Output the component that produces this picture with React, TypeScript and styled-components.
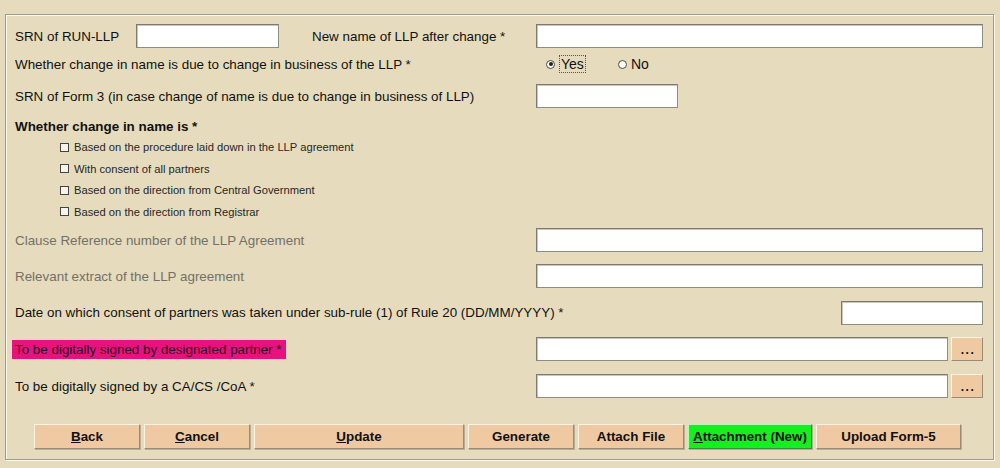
import React from "react";
import styled, { createGlobalStyle } from "styled-components";

const Global = createGlobalStyle`
  html, body { margin: 0; padding: 0; background: #e6dcbd; }
  body { font-family: "Liberation Sans", Arial, sans-serif; font-size: 13.4px; color: #111; }
  * { box-sizing: border-box; }
`;

const Page = styled.div`
  width: 1000px;
  height: 468px;
  padding: 14px 6px 0 5px;
  background: #e6dcbd;
`;

const Frame = styled.div`
  height: 446px;
  border: 1px solid #9d9a8e;
  box-shadow: inset 1px 1px 0 #fbf8ee, 1px 1px 0 #fbf8ee;
  padding: 9px 10px 0 9px;
  display: flex;
  flex-direction: column;
`;

const Row = styled.div<{ $mt?: number; $h?: number }>`
  display: grid;
  grid-template-columns: 1fr 447px;
  align-items: center;
  margin-top: ${(p) => p.$mt ?? 0}px;
  height: ${(p) => p.$h ?? 24}px;
`;

const SplitRow = styled.div<{ $mt?: number }>`
  display: flex;
  align-items: center;
  justify-content: space-between;
  margin-top: ${(p) => p.$mt ?? 0}px;
  height: 24px;
`;

const Inline = styled.div`
  display: flex;
  align-items: center;
`;

const Label = styled.span<{ $muted?: boolean; $w?: number; $ml?: number }>`
  color: ${(p) => (p.$muted ? "#737069" : "#111")};
  white-space: nowrap;
  ${(p) => (p.$w ? `width: ${p.$w}px;` : "")}
  ${(p) => (p.$ml ? `margin-left: ${p.$ml}px;` : "")}
`;

const Heading = styled.div<{ $mt?: number }>`
  font-weight: bold;
  margin-top: ${(p) => p.$mt ?? 0}px;
  height: 16px;
  line-height: 16px;
`;

const Highlight = styled.span`
  background: #e6127e;
  color: #2a0a1c;
  margin-left: -3px;
  padding: 2px 4px 2px 3px;
  white-space: nowrap;
`;

const Input = styled.div<{ $w?: number }>`
  width: ${(p) => (p.$w ? `${p.$w}px` : "100%")};
  height: 24px;
  background: #fff;
  border: 1px solid #8f8c84;
  border-top-color: #7d7a72;
  border-left-color: #7d7a72;
  box-shadow: inset 1px 1px 0 #c9c5ba;
`;

const FieldWithButton = styled.div`
  display: flex;
  align-items: center;
  gap: 3px;
`;

const DotsButton = styled.div`
  width: 32px;
  height: 24px;
  flex: none;
  background: #efc9a1;
  border: 1px solid;
  border-color: #fff4e4 #9b8b76 #9b8b76 #fff4e4;
  font-weight: bold;
  font-size: 12px;
  letter-spacing: 1.5px;
  display: flex;
  justify-content: center;
  align-items: flex-end;
  padding-bottom: 4px;
  padding-left: 2px;
  line-height: 1;
`;

const RadioGroup = styled.div`
  display: flex;
  align-items: center;
  padding-left: 10px;
  height: 24px;
`;

const RadioOption = styled.label<{ $w?: number }>`
  display: flex;
  align-items: center;
  gap: 4px;
  width: ${(p) => p.$w ?? 72}px;
  font-size: 14px;
`;

const RadioCircle = styled.span<{ $on?: boolean }>`
  width: 9px;
  height: 9px;
  border-radius: 50%;
  border: 1px solid #4a4a4a;
  background: #fbf9f3;
  position: relative;
  flex: none;
  &::after {
    content: "";
    display: ${(p) => (p.$on ? "block" : "none")};
    position: absolute;
    left: 1.5px;
    top: 1.5px;
    width: 4px;
    height: 4px;
    border-radius: 50%;
    background: #222;
  }
`;

const Focus = styled.span`
  border: 1px dotted #555;
  padding: 0 1px;
  line-height: 16px;
`;

const Checks = styled.div`
  display: flex;
  flex-direction: column;
  gap: 5.5px;
  margin-top: 4.5px;
  padding-left: 45px;
`;

const CheckRow = styled.label`
  display: flex;
  align-items: center;
  gap: 5px;
  height: 16px;
  font-size: 11.2px;
  color: #262626;
`;

const CheckBox = styled.span`
  width: 9px;
  height: 9px;
  border: 1px solid #444;
  background: #f7f4ea;
  flex: none;
`;

const ButtonBar = styled.div`
  display: flex;
  gap: 4px;
  margin-top: 26px;
  padding-left: 19px;
`;

const Button = styled.div<{ $w: number; $green?: boolean }>`
  width: ${(p) => p.$w}px;
  height: 25px;
  background: ${(p) => (p.$green ? "#15ef1f" : "#efc9a1")};
  border: 1px solid;
  border-color: ${(p) =>
    p.$green ? "#b7f7b4 #3b8c38 #3b8c38 #b7f7b4" : "#fff4e4 #9b8b76 #9b8b76 #fff4e4"};
  box-shadow: 1px 1px 0 #b9ad95;
  font-weight: bold;
  display: flex;
  align-items: center;
  justify-content: center;
  color: #111;
  white-space: nowrap;
  u { text-decoration: underline; }
`;

export default function App() {
  return (
    <Page>
      <Global />
      <Frame>
        <Row $h={24}>
          <Inline>
            <Label $w={121}>SRN of RUN-LLP</Label>
            <Input $w={143} />
            <Label $ml={33}>New name of LLP after change *</Label>
          </Inline>
          <Input />
        </Row>

        <Row $mt={4} $h={18}>
          <Label>Whether change in name is due to change in business of the LLP *</Label>
          <RadioGroup>
            <RadioOption $w={72}>
              <RadioCircle $on />
              <Focus>Yes</Focus>
            </RadioOption>
            <RadioOption>
              <RadioCircle />
              <span>No</span>
            </RadioOption>
          </RadioGroup>
        </Row>

        <Row $mt={14}>
          <Label>SRN of Form 3 (in case change of name is due to change in business of LLP)</Label>
          <Input $w={142} />
        </Row>

        <Heading $mt={10.5}>Whether change in name is *</Heading>

        <Checks>
          <CheckRow><CheckBox />Based on the procedure laid down in the LLP agreement</CheckRow>
          <CheckRow><CheckBox />With consent of all partners</CheckRow>
          <CheckRow><CheckBox />Based on the direction from Central Government</CheckRow>
          <CheckRow><CheckBox />Based on the direction from Registrar</CheckRow>
        </Checks>

        <Row $mt={8.5}>
          <Label $muted>Clause Reference number of the LLP Agreement</Label>
          <Input />
        </Row>

        <Row $mt={12}>
          <Label $muted>Relevant extract of the LLP agreement</Label>
          <Input />
        </Row>

        <SplitRow $mt={12.5}>
          <Label>Date on which consent of partners was taken under sub-rule (1) of Rule 20 (DD/MM/YYYY) *</Label>
          <Input $w={142} />
        </SplitRow>

        <Row $mt={12.5}>
          <Label><Highlight>To be digitally signed by designated partner *</Highlight></Label>
          <FieldWithButton>
            <Input />
            <DotsButton>...</DotsButton>
          </FieldWithButton>
        </Row>

        <Row $mt={13}>
          <Label>To be digitally signed by a CA/CS /CoA *</Label>
          <FieldWithButton>
            <Input />
            <DotsButton>...</DotsButton>
          </FieldWithButton>
        </Row>

        <ButtonBar>
          <Button $w={106}><span><u>B</u>ack</span></Button>
          <Button $w={106}><span><u>C</u>ancel</span></Button>
          <Button $w={210}><span><u>U</u>pdate</span></Button>
          <Button $w={106}>Generate</Button>
          <Button $w={106}>Attach File</Button>
          <Button $w={124} $green><span><u>A</u>ttachment (New)</span></Button>
          <Button $w={145}>Upload Form-5</Button>
        </ButtonBar>
      </Frame>
    </Page>
  );
}
